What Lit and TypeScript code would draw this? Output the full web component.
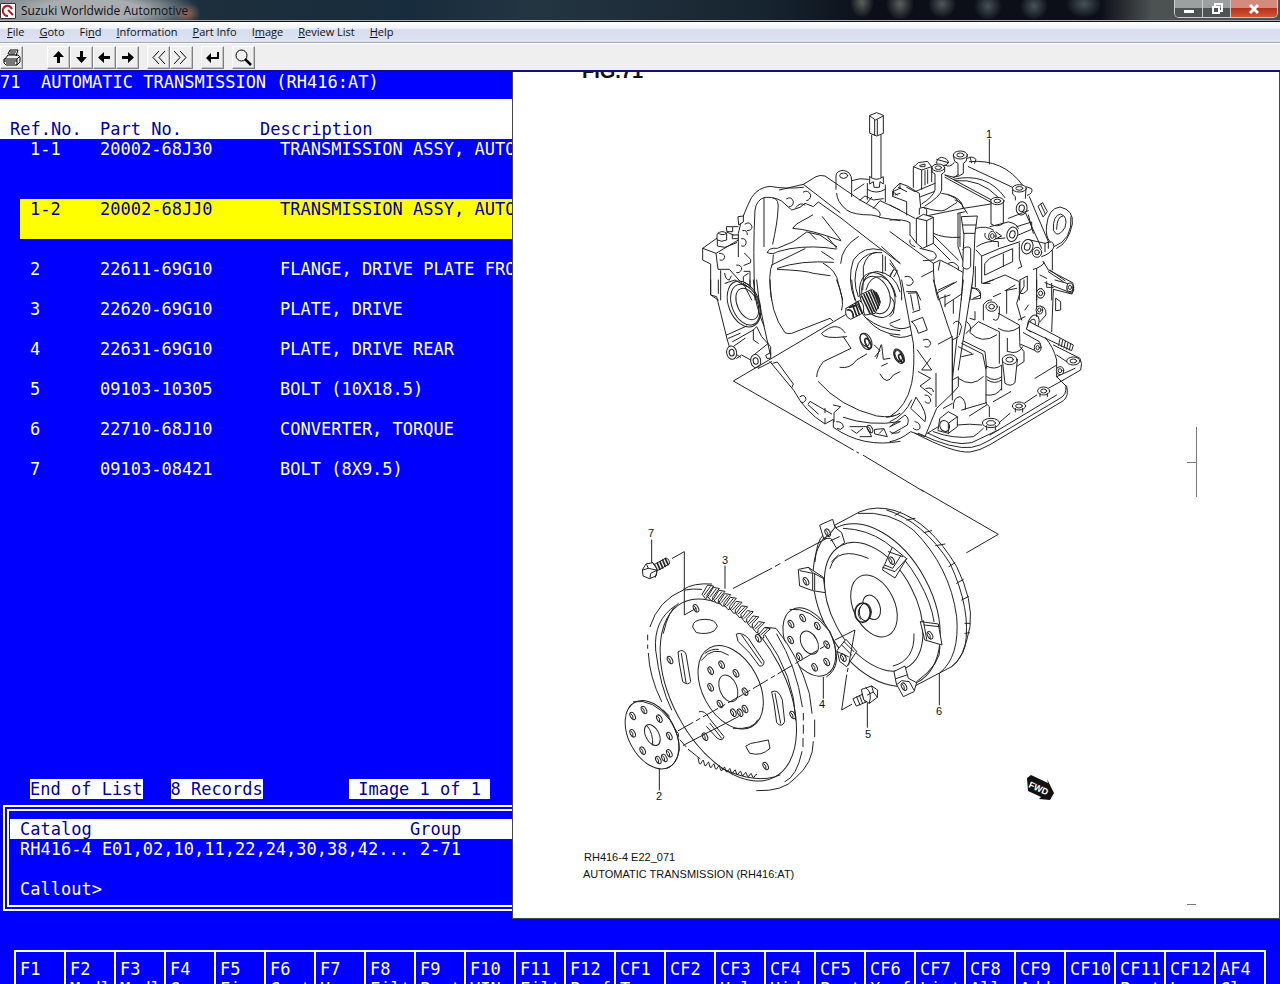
import { LitElement, html, svg, css } from "lit";
import { customElement } from "lit/decorators.js";

type Hole = [number, number];

const menus: [string, string, string][] = [
  ["", "F", "ile"], ["", "G", "oto"], ["Fi", "n", "d"], ["", "I", "nformation"],
  ["", "P", "art Info"], ["I", "m", "age"], ["", "R", "eview List"], ["", "H", "elp"],
];

const parts = [
  { ref: "1-1", no: "20002-68J30", text: "TRANSMISSION ASSY, AUTO", kind: "tall" },
  { ref: "1-2", no: "20002-68JJ0", text: "TRANSMISSION ASSY, AUTO", kind: "tall selected" },
  { ref: "2", no: "22611-69G10", text: "FLANGE, DRIVE PLATE FRO", kind: "" },
  { ref: "3", no: "22620-69G10", text: "PLATE, DRIVE", kind: "" },
  { ref: "4", no: "22631-69G10", text: "PLATE, DRIVE REAR", kind: "" },
  { ref: "5", no: "09103-10305", text: "BOLT (10X18.5)", kind: "" },
  { ref: "6", no: "22710-68J10", text: "CONVERTER, TORQUE", kind: "" },
  { ref: "7", no: "09103-08421", text: "BOLT (8X9.5)", kind: "" },
];

const keys: [string, string][] = [
  ["F1", ""], ["F2", "Modl"], ["F3", "Modl"], ["F4", "Grp"], ["F5", "Fig"], ["F6", "Cost"], ["F7", "Home"],
  ["F8", "Filt"], ["F9", "Post"], ["F10", "VIN"], ["F11", "Filt"], ["F12", "Prof"], ["CF1", "Top"], ["CF2", ""],
  ["CF3", "Help"], ["CF4", "Hide"], ["CF5", "Post"], ["CF6", "Xref"], ["CF7", "List"], ["CF8", "All"],
  ["CF9", "Add"], ["CF10", ""], ["CF11", "Part"], ["CF12", "Lang"], ["AF4", "Clos"],
];

@customElement("parts-diagram")
class PartsDiagram extends LitElement {
  static styles = css`
    :host { display: block; }
    .sheet { display: block; width: 100%; height: auto; }
    .ink { fill: none; stroke: #222; stroke-width: 3; stroke-linejoin: round; stroke-linecap: round; }
    .solid { fill: #fff; }
    .bare { stroke: none; }
    .dark { fill: #333; }
    .heavy { stroke-width: 5; }
    .dash { stroke-dasharray: 50 12 12 12; }
    .thin { fill: none; stroke: #777; stroke-width: 1; }
    .callout { font: 11px "Liberation Sans", Arial, sans-serif; text-anchor: middle; fill: #111; }
    .caption { font: 11px "Liberation Sans", Arial, sans-serif; fill: #111; }
    .figure { font: bold 20px "Liberation Sans", Arial, sans-serif; fill: #111; }
    .fwd { font: bold 9px "Liberation Sans", Arial, sans-serif; fill: #fff; }
  `;

  ring(x: number, y: number, rx: number, ry: number, tilt = -28, cls = "") {
    return svg`<ellipse class=${cls} cx=${x} cy=${y} rx=${rx} ry=${ry} transform="rotate(${tilt} ${x} ${y})"></ellipse>`;
  }

  holes(list: Hole[]) {
    return list.map(([x, y]) => svg`${this.ring(x, y, 7, 12)}<path d="M${x - 5} ${y - 7}q8 6 6 16"></path>`);
  }

  boss(x: number, y: number, rx: number, ry: number, tilt = 0) {
    return svg`${this.ring(x, y, rx, ry, tilt, "solid")}${this.ring(x, y, rx / 2, ry / 2, tilt)}`;
  }

  gearTop() {
    return Array.from({ length: 11 }, (_, i) => {
      const x = 277 + i * 17;
      const y = 222 + i * 6 + i * i * 0.6;
      const rise = 27 - i * 0.8;
      return svg`<path class="solid" d="M${x} ${y}l16 ${-rise}l18 3l-20 ${rise}v9q-6 4 -8 -2zM${x + 6} ${y + 2}l18 ${-rise + 3}"></path>`;
    });
  }

  gearBottom() {
    let d = "M264 714";
    for (let i = 0; i < 11; i++) d += `l4 ${17 - i * 0.6}q5 4 7 -5l5 ${-6 + i * 0.3}`;
    return svg`<path d=${d}></path>`;
  }

  housing() {
    return svg`
      <g transform="translate(690 100) scale(.33333)">
        <path d="M540 46L560 38L580 46V100L560 108L540 100ZM540 48L556 60L580 48M554 60V106M562 60V106M545 106V232M573 106V232"></path>
        <path d="M539 230V252L550 245L552 262H568L570 245L580 252V230Q558 246 539 230M532 250V298M586 255V305M532 268Q558 285 586 268"></path>
        <path d="M438 268V228Q438 213 460 211Q484 215 485 240V290M485 242Q510 232 535 238M492 272L522 252"></path>
        <ellipse cx="461" cy="227" rx="12" ry="8"></ellipse>
        <path d="M145 470V400Q155 350 185 292Q205 262 240 259Q285 268 340 262M268 270L340 253L378 230Q390 224 405 228L510 300L560 328Q576 340 568 350L545 345Q490 345 470 330Q440 305 440 280"></path>
        <path d="M340 253L450 338M195 600Q188 450 195 330Q200 298 225 292Q265 290 285 312L305 330L330 322L345 310L370 320L385 306L450 352L550 430L630 490"></path>
        <path d="M222 294V440M250 294Q268 296 264 330Q262 370 248 432M250 465L248 490Q232 520 245 600"></path>
        <path d="M290 296Q305 288 310 305Q310 320 298 320M340 276Q355 268 362 285Q362 300 350 302M318 322Q330 305 345 315"></path>
        <path d="M165 372Q180 362 186 380Q186 392 172 392M158 392Q172 388 172 404M155 416Q170 414 168 430Q165 442 155 438M88 460Q104 460 104 472Q100 484 90 480M140 495Q156 495 155 508Q150 520 140 518M104 520Q106 540 118 540L124 528"></path>
        <path d="M164 460L182 478V488L162 496M162 514H180V558L160 545V530L175 520"></path>
        <path d="M80 415L38 445V480L62 492V585L85 600M38 445L78 460L84 508L118 508L165 560L185 600M78 460L145 420M92 512V600"></path>
        <path class="solid" d="M82 402Q95 388 110 400V420Q95 428 82 420ZM110 380H128V395H112ZM128 405H145V416H128ZM145 350L160 348V366L147 374Z"></path>
        <path d="M84 398Q95 410 110 400M82 420V438L105 442L140 428M110 396L130 405M130 380H144"></path>
        <path d="M368 345L320 372L308 385Q360 388 452 422M397 350L452 420M232 458Q235 442 262 445L310 425L350 396L390 405L440 440M232 458Q250 465 262 455L300 446Q370 435 438 447M245 495L345 446M262 505Q330 480 430 487M262 508Q350 512 370 520L420 527M395 455L430 478M400 490Q440 512 445 550L458 600M360 400L378 418M412 410L440 445"></path>
        <path d="M452 490Q455 440 505 410M495 600Q470 540 490 480Q520 435 575 450M505 590Q485 540 505 490Q530 452 575 458M520 545V500Q530 460 560 457M578 465V520M586 470V512M600 525L612 508M612 530L622 512"></path>
        <path d="M518 570Q515 520 560 514Q615 520 630 575M528 570Q540 525 575 530Q610 545 618 590M575 440L630 490"></path>
        <path d="M510 300L525 288L550 300L580 296M530 310L545 292M550 325L570 302L630 330M568 352L630 362M608 290V275L630 265M615 285L630 280"></path>
      </g>
      <g transform="translate(890 100) scale(.33333)">
        <path d="M298 118V192"></path>
        ${this.boss(211, 165, 21, 12)}${this.boss(145, 203, 19, 11)}
        <path d="M190 168L194 184L204 190V225M232 168L228 184L220 190V220Q210 230 190 232M165 195Q180 205 192 188M165 225L192 232L205 224"></path>
        <path d="M126 206V216L135 222V270Q130 290 95 312M164 206V216L155 222V270Q150 290 105 318"></path>
        <path d="M70 262V202L85 188L112 184L125 200V245M70 200L95 210V268M95 210L125 200M105 212V255M113 210V250M90 196L105 192V200H92Z"></path>
        <path d="M140 190Q138 175 155 172Q175 176 175 188Q170 198 160 198M140 178L175 188M233 175Q246 166 258 178L254 190M240 172L245 188"></path>
        <path d="M238 185Q340 175 398 256M235 200L372 264M190 238Q290 215 345 293M195 242Q270 235 325 292M165 225L305 300M165 232L305 308"></path>
        ${this.boss(388, 265, 21, 11)}${this.boss(322, 303, 20, 11)}
        <path d="M368 268V282L376 290V300M408 268L406 295M303 306V372Q322 384 340 370V306M408 260L425 266Q430 280 412 286M418 290L475 425M405 335L455 445M415 345L430 400"></path>
        ${this.boss(395, 325, 16, 20, 10)}
        <path d="M108 348L220 325L303 312M100 322Q150 338 165 330L200 308M155 280Q200 280 232 340M175 285Q215 292 220 325M195 300L215 310"></path>
        <path class="solid" d="M80 355L100 343L130 352V430L98 445L80 430Z"></path>
        <path d="M80 355L110 362L130 352M110 362V440M88 343V325Q100 318 110 328V345"></path>
        <path d="M0 315L75 355M0 360Q40 356 60 368V405M0 395L130 490Q130 560 145 600M10 285V268L30 250L52 258L88 280L92 322M10 290L50 305V345M50 262L75 275L135 250M25 262L50 275M30 250V265M8 275L22 285M92 290L132 275"></path>
        <path d="M60 405L80 430M130 400Q160 415 210 412M132 408L205 480M130 430L180 480M95 530L130 512M145 570L192 548M130 490L150 480L190 500L220 518M90 445L130 455Q148 470 130 480L100 482M60 420Q55 435 75 440M175 490Q190 480 205 500L205 510M150 485L145 510"></path>
        <path class="solid bare" d="M222 400H255L250 520L240 600H214L220 505Z"></path>
        <path d="M204 340V440L218 480M210 340V440M204 340L225 335M215 350L262 348L255 400H222ZM218 375H258M222 400L218 500Q230 515 242 500V445Q230 435 218 448M255 400L250 520L240 600M220 505L214 600"></path>
        <path d="M256 385Q290 376 310 390M300 380L355 366Q380 370 385 385M355 355L415 332M380 380L425 366V388L385 405M300 418L345 414M285 400Q280 415 300 420M260 440Q290 420 325 425V440"></path>
        ${this.boss(307, 408, 11, 14)}${this.boss(367, 403, 16, 22, 15)}${this.boss(412, 440, 17, 22, 15)}${this.boss(441, 457, 14, 15)}
        <path d="M318 396L335 408L320 415M420 420L465 430Q492 418 492 440Q485 460 455 470M388 430V475L395 500M465 430V455M475 425V445"></path>
        <path d="M470 375Q475 325 510 321Q552 330 547 372Q535 430 500 445M470 375Q465 410 480 425M543 350Q548 420 492 440M490 390Q488 345 512 342Q535 350 525 382Q512 405 500 402ZM500 388Q500 350 518 348"></path>
        <path d="M445 318L458 308L472 335L460 350ZM452 312L466 342"></path>
        <path d="M285 490L300 475L368 446V485L285 525ZM340 462V500M258 450L275 468V550H300M275 468L330 445L390 425M256 500V560M282 550L345 525L388 545V600M430 508L440 505V600M395 500L385 505M350 570L375 555M390 540L412 528V570Q400 585 392 580"></path>
        <path d="M460 485L475 510L548 548Q556 562 546 580L465 548M475 515L520 545M480 510L525 542M487 450V510M485 550V600M440 505Q470 490 460 485M450 525L470 535"></path>
        ${this.boss(540, 565, 9, 14)}${this.boss(452, 580, 11, 14)}
        <path d="M245 565Q272 560 272 585L250 595M45 530Q65 525 70 545Q65 560 50 555M50 575H80L92 600M0 490L20 515M10 510L0 530M0 480Q40 530 35 600"></path>
      </g>
      <g transform="translate(690 280) scale(.33333)">
        <path d="M62 0V45L80 50L112 180M85 0V40M105 10L135 0L170 20M180 0V25L160 10"></path>
        ${this.ring(162, 72, 46, 72, -22)}${this.ring(166, 74, 40, 64, -22)}${this.ring(172, 72, 30, 50, -25)}
        <path d="M190 0Q195 80 222 138L240 220M200 0Q205 70 222 138M240 0Q240 100 285 158Q292 162 305 160L420 115L428 122M455 90Q465 60 440 0M110 165L170 138M115 175L150 160M112 180L118 200M128 185L190 150L200 140L215 170L242 200V225M190 150V180L205 190"></path>
        ${this.boss(125, 218, 15, 20, -10)}${this.boss(197, 243, 15, 20, -10)}
        <path d="M132 198L165 175M140 235L155 225L182 240M195 222L235 190M205 265L245 245M142 225L152 232M228 225L242 218V235H232Z"></path>
        <path d="M470 102L130 303L490 510M500 516L506 519M520 526L700 634"></path>
        <path d="M240 245L312 332Q345 395 405 432L430 418V442Q520 505 630 484M248 250L262 246L310 312L306 322M355 372L360 364L425 402M355 375L385 402M405 430V415M330 350Q345 340 348 358Q342 372 332 366"></path>
        <path d="M430 375L452 380L432 398V425M440 425Q460 425 460 442Q452 452 442 446M480 440L530 440L545 470L510 470M485 450L500 460L518 445M555 448L582 446L592 470L555 462ZM568 460L580 448M600 440L630 425M600 455Q615 465 630 455M405 385V398"></path>
        <path d="M385 305Q450 380 560 408Q610 415 630 400M460 412Q540 440 630 425M590 412L610 408"></path>
        <path d="M395 160Q440 120 465 158M395 162Q400 178 470 170M460 170L483 205L400 245Q380 270 380 290M450 262Q480 268 500 240L530 222M570 282Q590 320 610 285L630 275M575 258L592 250M553 195L570 212L555 230M575 195L580 238L600 235M573 195L560 235"></path>
        ${this.ring(562, 45, 50, 70, -22)}${this.ring(558, 45, 40, 58, -22)}
        <path class="solid" d="M510 45L545 28Q570 40 570 70L555 100L525 105Z"></path>
        <path class="heavy" d="M515 48L540 100M522 44L547 98M529 40L553 94M536 36L559 90M543 32L565 84M551 34L568 75M558 38L570 66"></path>
        <path class="solid" d="M468 85L508 62Q525 70 520 98L482 118Q462 110 468 85"></path>
        <path class="heavy" d="M488 75L500 108M496 70L508 104M504 65L516 98M472 90Q490 88 490 112M478 82L498 76"></path>
        <path d="M485 0Q490 100 570 150Q600 165 630 165M530 115Q570 148 630 152M600 130L630 118"></path>
        ${this.ring(528, 184, 16, 26, -25)}${this.ring(524, 180, 12, 20, -25)}${this.ring(534, 190, 7, 16, -25, "heavy")}${this.ring(624, 226, 12, 20, -20)}
        ${this.holes([[540, 447]])}
      </g>
      <g transform="translate(890 280) scale(.33333)">
        <path d="M35 0L70 190Q75 260 65 310Q50 380 0 410M130 0Q160 100 187 175V360M187 175V340L140 385L105 470L62 455Q30 480 0 485M138 280V380M0 425Q45 405 65 360M0 50Q20 60 10 100L0 110M0 135Q30 155 60 140M0 165Q30 180 65 165"></path>
        <path d="M55 40L80 38L90 90L68 97M62 45L70 90M65 125L98 112L112 150L85 160Q78 135 65 125M100 180Q118 172 122 190Q118 206 105 200M82 210L125 270H95L122 235M85 275L122 295L90 318L125 345M108 325Q130 320 130 335M105 345Q122 345 122 365Q115 375 105 365M78 352L62 385L105 425Q115 400 78 352M75 425Q92 428 90 445Q80 455 70 445M0 440L45 405Q60 415 52 435L5 462"></path>
        <path d="M145 192L187 170M140 40L200 5M150 55L180 45M165 75L215 42M165 45V80M190 60V100"></path>
        <path class="solid bare" d="M222 0H248L205 280L190 290Z"></path>
        <path d="M220 0L187 300L205 290V320L187 340M248 0L205 270M190 130Q205 112 215 140L208 165M187 180L205 170"></path>
        ${this.ring(28, 230, 13, 22, -25)}${this.ring(26, 228, 9, 17, -25)}${this.ring(34, 235, 6, 13, -25, "heavy")}
        <path d="M215 190L278 222L288 270V370L298 380V410M220 183L285 215L290 265M205 200L245 220M215 230L250 222M205 295Q245 325 280 290M228 160L265 125L328 155V250M240 158Q275 195 320 165M230 125Q248 140 240 156M288 258Q315 272 335 255V330M290 290Q315 308 335 290M292 300Q315 315 335 300M288 345Q320 350 335 325"></path>
        <path d="M325 100L388 135L390 200L402 215V245L382 258M325 145Q355 165 388 142M352 175V215M355 215Q385 225 398 200M280 120V75Q290 58 305 60M328 80V100M310 118Q325 130 328 100"></path>
        ${this.boss(305, 80, 17, 14)}
        <path class="solid" d="M337 240L345 310Q362 322 375 308L382 240Z"></path>${this.boss(359, 239, 22, 15)}
        <path class="solid" d="M400 158L448 185Q458 200 446 216L390 192"></path>${this.boss(443, 203, 10, 13)}
        ${this.ring(430, 130, 16, 26, 20)}${this.ring(426, 133, 9, 16, 20)}
        <path class="solid" d="M418 125L550 195L545 212L410 148Z"></path>
        <path d="M510 176L506 196M518 180L514 200M526 184L522 204M534 188L530 208M542 192L538 210"></path>
        <path d="M465 172Q490 200 500 240V290M490 195L570 235Q578 250 572 270L520 300M500 225L530 245M500 290L555 265"></path>
        ${this.boss(550, 243, 20, 12)}${this.boss(510, 272, 11, 12)}
        <path d="M75 460Q190 520 240 516Q270 512 300 494L520 362Q538 348 530 318M85 460Q190 510 245 502Q270 498 300 480L510 355Q530 345 528 318L500 290M115 460Q190 500 245 488L325 450M130 455Q190 478 250 470Q265 460 280 445M325 430L360 400M400 372L440 345M475 325L520 300M300 465L500 345"></path>
        ${this.boss(303, 429, 26, 14)}${this.boss(387, 378, 20, 12)}${this.boss(461, 333, 18, 12)}
        <path d="M200 435Q240 430 275 435M238 408L290 375M310 365L362 335M435 295L500 255M290 437V450M316 437V450M376 385V396M398 385V396M450 340V350M472 340V350"></path>
        <path class="solid" d="M150 415L175 395L202 410V440L175 460L145 452Z"></path>
        ${this.ring(164, 438, 14, 17)}
        <path d="M175 460V430L202 410M112 460L145 440M190 385Q188 352 210 350Q230 360 226 388M215 390L290 368M160 385L187 370"></path>
        <path d="M390 0V40L380 70L395 120M402 0V20L390 40M440 0V110M350 30V100M310 50L332 40M345 32L380 25M385 120L405 110M405 90L415 75M495 0L548 15Q556 30 546 42L490 28M490 30L485 155M498 55L512 65V90L498 92ZM440 80Q470 72 468 105L450 125M245 22Q275 30 272 55L245 58M255 95V120L240 115M280 10L310 0M470 5V22H490"></path>
        ${this.boss(452, 40, 12, 14)}${this.boss(540, 22, 9, 13)}${this.boss(448, 90, 10, 12)}
      </g>`;
  }

  converter() {
    return svg`
      <g transform="translate(780 490) scale(.33333)">
        <path d="M425 0L655 133L560 188"></path>
        <path class="solid" d="M165 105L240 65Q290 45 345 62Q450 95 530 230Q580 330 570 410Q550 510 515 530L410 585Z"></path>
        <path d="M235 70Q330 62 400 120Q510 230 530 380Q540 500 480 548M320 60Q430 95 510 220Q575 360 555 470Q545 505 515 530"></path>
        <path d="M345 76L362 66M380 90L405 85M432 128L455 122M467 167L495 162M507 230L525 218M530 280L550 268M545 330L565 320M555 400H570M555 430L568 428"></path>
        ${this.ring(290, 345, 165, 262, -28, "solid")}
        <path d="M190 115Q330 120 415 270Q455 340 462 395M480 470Q485 520 410 575M105 215Q110 150 130 135"></path>
        ${this.ring(281, 350, 126, 208)}
        <path d="M150 235Q170 165 265 205M402 432Q405 510 340 528M155 215L175 195"></path>
        ${this.ring(282, 348, 62, 98, -25)}${this.ring(275, 352, 25, 38, -20)}
        <ellipse class="solid heavy" cx="248" cy="368" rx="23" ry="29"></ellipse>
        <ellipse cx="256" cy="366" rx="18" ry="26"></ellipse><path d="M240 352Q228 370 242 388"></path>
        <path class="solid" d="M120 105L158 88L165 112L185 128L194 158L170 175L152 145L132 145ZM152 152L178 140M132 145L148 135L165 112"></path>
        <path class="solid" d="M338 172L380 206L345 264L308 240ZM325 185L368 200"></path>
        <path d="M308 232L345 245L380 206M316 226L338 235L362 198"></path>
        <path class="solid" d="M56 238L85 232L130 262L136 308L98 302L60 288Z"></path>
        <path d="M60 242L98 250V300M104 250V300M85 232L98 248L130 265"></path>
        <path class="solid" d="M422 395L475 402L486 465L435 450Z"></path>
        <path d="M432 405L478 410M430 392L440 448"></path>
        <path class="solid" d="M343 544L375 528L385 565L410 578L402 605L370 620L350 584Z"></path>
        <path d="M348 566L380 555M350 584L365 572L388 575L402 600"></path>
        <path class="solid" d="M172 480L198 448L230 484L200 530L180 515Z"></path>
        <path d="M185 465L215 495M192 455L222 485M172 485L205 500"></path>
        ${this.holes([[143, 128], [335, 212], [78, 274], [450, 436], [372, 590], [190, 503]])}
        ${this.ring(88, 456, 68, 110, -28, "solid")}<path d="M30 358Q90 350 150 425Q170 470 170 510Q165 545 140 560"></path>
        ${this.ring(88, 458, 24, 37)}
        ${this.holes([[33, 402], [68, 384], [112, 408], [32, 450], [140, 464], [58, 500], [104, 532], [140, 516]])}
        <path d="M165 450L225 420L206 525M204 535L202 545M200 555L185 660L215 643M130 562V625M262 640V712M478 550V645"></path>
        <path class="solid" d="M220 626L262 606L272 630L230 648Z"></path>
        <path d="M230 620L240 645M238 616L248 641M246 612L256 637M254 609L264 634"></path>
        <path class="solid" d="M245 598L275 588L293 600L292 622L268 640L252 630Z"></path>
        <path d="M258 594Q278 605 268 640M275 588L280 606L292 622M262 615L280 606"></path>
      </g>`;
  }

  flywheel() {
    return svg`
      <g transform="translate(610 520) scale(.33333)">
        <path class="solid bare" d="M115 400Q110 320 145 265Q190 205 250 192Q290 188 330 202L490 322Q560 400 600 520Q622 620 608 700Q580 785 520 806Q480 816 440 812L270 715Q190 640 150 545Q118 470 115 400Z"></path>
        <path d="M120 320Q145 240 220 210M220 208Q250 188 305 192M113 345V360M113 375V385M115 400Q118 470 155 545M225 210Q250 205 275 208M465 322L498 325Q565 405 598 520L606 580M614 600V650M610 665Q610 730 555 775Q520 815 440 812M210 660L228 680M235 688L270 716M500 342Q560 440 577 560M580 580V600M580 615V640M579 655V680M576 695Q560 770 525 785"></path>
        ${this.ring(355, 510, 170, 296)}
        <path d="M195 258Q130 300 137 390Q150 500 185 570M160 340Q175 270 205 250M335 745Q440 795 510 765M465 345Q555 470 557 600"></path>
        ${this.gearTop()}${this.gearBottom()}
        <path d="M248 320Q248 298 285 298Q318 298 322 320L312 333Q290 345 260 338ZM380 342Q395 335 415 355L462 425Q462 440 448 438L420 400L385 365ZM395 345L455 430M205 395Q220 385 228 402L242 485Q235 498 218 485L208 430ZM214 400L228 488M486 515Q505 505 517 540L524 605Q515 625 500 608L492 550ZM495 520L512 610M408 678Q420 668 440 667L475 660L480 685Q455 710 420 700ZM268 575Q285 570 298 595L342 650Q338 665 322 655L290 620M300 610L335 655"></path>
        ${this.ring(362, 502, 85, 134)}<path d="M275 420Q310 375 355 405M370 625Q430 630 443 600M285 400Q305 385 325 388"></path>
        ${this.ring(355, 505, 26, 42, -22)}
        ${this.holes([[335, 434], [302, 452], [378, 460], [302, 502], [405, 515], [330, 552], [370, 578], [390, 578], [405, 567], [258, 265], [180, 420], [285, 650], [548, 585], [467, 738], [445, 355]])}
        <path class="dash" d="M205 632L405 520L655 372"></path>
        <path d="M220 676L385 590"></path>
        ${this.ring(126, 644, 70, 110, -28, "solid")}<path d="M70 545Q130 535 180 600Q210 650 208 690Q200 735 170 746M160 570L178 588M195 628L205 640V650"></path>
        ${this.ring(127, 645, 20, 34)}<path d="M112 618Q130 640 128 675"></path>
        ${this.holes([[102, 570], [68, 588], [148, 596], [68, 640], [178, 648], [98, 692], [145, 720], [163, 714], [178, 700]])}
        <path class="solid" d="M130 135L168 114Q180 118 178 132L142 152Z"></path>
        <path class="heavy" d="M142 130L150 148M150 125L158 144M158 120L166 139M166 116L174 134"></path>
        <path class="solid" d="M98 148L108 132L128 128L142 148L138 168L118 176L100 168Z"></path>
        <path d="M98 150L115 145L138 150M115 145L110 134M120 176L122 160L138 152M125 126Q150 140 136 172M125 60V126"></path>
        <path d="M187 115L223 95V285L258 265M345 138V205M370 205L485 145M496 139L510 131M525 122L650 55M148 747V810"></path>
      </g>`;
  }

  render() {
    return html`
      <svg class="sheet" viewBox="513 72 766 846" role="img" aria-label="Exploded view of the automatic transmission">
        <text class="figure" x="582" y="78">FIG.71</text>
        <g class="ink">${this.housing()}${this.converter()}${this.flywheel()}</g>
        <text class="callout" x="989" y="138">1</text>
        <text class="callout" x="659" y="800">2</text>
        <text class="callout" x="725" y="564">3</text>
        <text class="callout" x="822" y="708">4</text>
        <text class="callout" x="868" y="738">5</text>
        <text class="callout" x="939" y="715">6</text>
        <text class="callout" x="651" y="537">7</text>
        <path class="thin" d="M1196.5 427V497M1187 462.500H1196M1187 904.500H1196"></path>
        <path d="M1027 778L1031 775L1048 783L1047 779L1054 793L1050 800L1039 799L1041 797L1028 791Z" fill="#111"></path>
        <text class="fwd" transform="translate(1028 787) rotate(24)">FWD</text>
        <text class="caption" x="584" y="861">RH416-4 E22_071</text>
        <text class="caption" x="583" y="878">AUTOMATIC TRANSMISSION (RH416:AT)</text>
      </svg>`;
  }
}

const icons = {
  print: svg`<path d="M7 7L9 3H17L15 9M4 12L7 8H17L19 10V15L16 18H5L3 16V12H16L19 9M3 14H16M5 16H14M9 5H15M8 7H14M16 12V18" fill="none" stroke="#000"></path>`,
  up: svg`<path d="M10.500 4L16 10H12V16H9V10H5Z"></path>`,
  down: svg`<path d="M10.500 16L16 10H12V4H9V10H5Z"></path>`,
  left: svg`<path d="M4 10.500L10 5V9H16V12H10V16Z"></path>`,
  right: svg`<path d="M17 10.500L11 5V9H5V12H11V16Z"></path>`,
  first: svg`<path d="M11 4L5 10.500L11 17M17 4L11 10.500L17 17" fill="none" stroke="#000"></path>`,
  last: svg`<path d="M3 4L9 10.500L3 17M9 4L15 10.500L9 17" fill="none" stroke="#000"></path>`,
  enter: svg`<path d="M4 11L9 6V10H15V5H17V12H9V16Z"></path>`,
  find: svg`<circle cx="8.500" cy="8.500" r="5.500" fill="none" stroke="#000"></circle><path d="M12 12L18 18" stroke="#000" stroke-width="2.500"></path>`,
};

@customElement("app-root")
class AppRoot extends LitElement {
  static styles = css`
    :host { display: flex; flex-direction: column; height: 100vh; overflow: hidden; background: #00f;
      font: 12px/20px "Open Sans", "Noto Sans", sans-serif; color: #111; }
    * { box-sizing: border-box; }
    button, input { font: inherit; color: inherit; margin: 0; border: 0; padding: 0; background: none; border-radius: 0; }
    .titlebar { display: flex; align-items: flex-start; flex: none; height: 22px; border-bottom: 1px solid #111; box-shadow: inset 0 -1px #a9adb0;
      background:
        radial-gradient(ellipse 110px 24px at 90px 10px, #a9adb0 45%, transparent),
        radial-gradient(ellipse 14px 10px at 187px 14px, #8a5548, transparent),
        radial-gradient(ellipse 12px 16px at 862px 2px, #5b605e, transparent),
        radial-gradient(ellipse 14px 16px at 900px 4px, #5b605e, transparent),
        radial-gradient(ellipse 14px 14px at 942px 4px, #50575a, transparent),
        radial-gradient(ellipse 14px 14px at 988px 6px, #46525a, transparent),
        radial-gradient(ellipse 14px 14px at 1034px 6px, #46525a, transparent),
        radial-gradient(ellipse 18px 14px at 1084px 4px, #46525a, transparent),
        linear-gradient(90deg, #7c868c 0, #1d2f3c 200px, #172c3d 32%, #243542 42%, #16242f 60%, #0c0f18 68%, #0c0f18 86%, #4c5252 90%, #4c5252); }
    .logo { flex: none; width: 16px; height: 16px; margin: 3px 5px 0 0; }
    .title { flex: 1; margin: 0; font: inherit; line-height: 21px; }
    .windowkeys { display: flex; height: 18px; margin-right: 2px; border: 1px solid #c9cccd; border-top: 0; border-radius: 0 0 5px 5px; overflow: hidden; }
    .windowkey { display: grid; place-items: center; width: 28px; background: linear-gradient(#9ca0a0 50%, #4e5454 50%); border-right: 1px solid #c9cccd; }
    .windowkey.close { width: 46px; border: 0; background: linear-gradient(#d48b7c 45%, #b8321b 50%, #d4553a); }
    .menubar { display: flex; flex: none; height: 21px; border-bottom: 1px solid #a3a7b0;
      background: linear-gradient(#fff, #f1f4fa 30%, #d6ddee 40%, #dfe4f3); }
    .menu { padding: 0 8px 0 7px; line-height: 20px; font-size: 11px; }
    .accel { text-decoration: underline; }
    .toolbar { display: flex; gap: 8px; flex: none; height: 29px; padding-top: 2px; background: #efefef; border-top: 1px solid #fff; border-bottom: 2px solid #10107c; }
    .group { display: flex; }
    .group.wide { margin-right: 16px; }
    .tool { width: 23px; height: 23px; border: 1px solid; border-color: #fff #808080 #808080 #fff; box-shadow: inset -1px -1px #c4c4c4; }
    .tool svg { display: block; }
    .work { display: grid; grid-template-columns: 2fr 3fr; flex: none; }
    .terminal { display: flex; flex-direction: column; min-width: 0; overflow: hidden; }
    .terminal, .keys { font: 17px/20px "DejaVu Sans Mono", "Liberation Mono", monospace; color: #fff; }
    .heading { margin: 0 0 7px; font: inherit; white-space: pre; }
    .list { border-spacing: 0; table-layout: fixed; width: 100%; white-space: nowrap; }
    .list th { padding: 20px 0 0; height: 40px; font-weight: inherit; text-align: left; background: #fff; color: #0000a0; }
    .list th:first-child { padding-left: 10px; width: 100px; }
    .list th:nth-child(2) { width: 160px; }
    .list td { height: 40px; padding: 0; vertical-align: top; }
    .list td:first-child { padding-left: 30px; }
    .list td:last-child { padding-left: 20px; }
    .list .tall td { height: 60px; }
    .list .selected td { color: #0000a0; background: linear-gradient(#ff0, #ff0) 0 0 / 100% 40px no-repeat; }
    .list .selected td:first-child { background-position: 20px 0; }
    .status { display: flex; gap: 28px; margin: auto 22px 6px 30px; color: #0000a0; white-space: nowrap; }
    .chip { background: #fff; }
    .chip.image { margin-left: auto; padding: 0 9px; }
    .panel { margin: 0 -10px 8px 3px; padding: 8px 0 6px 1px; border: 6px double #fff; white-space: nowrap; }
    .pair { display: grid; grid-template-columns: 390px 1fr; padding-left: 10px; }
    .pair.head { background: #fff; color: #0000a0; }
    .pair .code { padding-left: 10px; }
    .prompt { display: flex; padding: 20px 0 0 10px; }
    .entry { flex: 1; min-width: 0; height: 20px; outline: 0; }
    .viewer { background: #fff; border: solid #444; border-width: 0 1px 1px; min-width: 0; }
    .keys { display: grid; grid-template-columns: repeat(25, 1fr); flex: none; margin: 31px 14px 0; border: solid #fff; border-width: 2px 1px 0; }
    .key { display: flex; flex-direction: column; align-items: flex-start; justify-content: flex-start; min-width: 0; height: 60px; padding: 7px 0 0 4px; border: solid #fff; border-width: 0 1px; overflow: hidden; white-space: nowrap; }
  `;

  tool(name: keyof typeof icons, label: string) {
    return html`<button class="tool" aria-label=${label}><svg width="21" height="21" viewBox="0 0 21 21">${icons[name]}</svg></button>`;
  }

  render() {
    return html`
      <header class="titlebar">
        <svg class="logo" viewBox="0 0 16 16"><rect width="16" height="16" fill="#fff"></rect><path d="M12 6Q10 2 6 3Q2 5 3 9Q4 13 8 13M8 7L13 12" fill="none" stroke="#b31c1c" stroke-width="2"></path><path d="M.5 .5H15.500V15.500H.5Z" fill="none" stroke="#333"></path></svg>
        <h1 class="title">Suzuki Worldwide Automotive</h1>
        <div class="windowkeys">
          <button class="windowkey" aria-label="Minimize"><svg width="12" height="12"><path d="M1 7H11V10H1Z" fill="#fff"></path></svg></button>
          <button class="windowkey" aria-label="Restore"><svg width="12" height="12"><path d="M4 3V1H11V8H9M2 4H8V10H2Z" fill="none" stroke="#fff" stroke-width="2"></path></svg></button>
          <button class="windowkey close" aria-label="Close"><svg width="12" height="12"><path d="M2 2L10 10M10 2L2 10" stroke="#fff" stroke-width="3"></path></svg></button>
        </div>
      </header>
      <nav class="menubar">${menus.map(([a, b, c]) => html`<button class="menu">${a}<span class="accel">${b}</span>${c}</button>`)}</nav>
      <div class="toolbar" role="toolbar">
        <div class="group wide">${this.tool("print", "Print")}</div>
        <div class="group">${this.tool("up", "Up")}${this.tool("down", "Down")}${this.tool("left", "Left")}${this.tool("right", "Right")}</div>
        <div class="group">${this.tool("first", "Previous page")}${this.tool("last", "Next page")}</div>
        <div class="group">${this.tool("enter", "Enter")}</div>
        <div class="group">${this.tool("find", "Zoom")}</div>
      </div>
      <main class="work">
        <section class="terminal">
          <h2 class="heading">71  AUTOMATIC TRANSMISSION (RH416:AT)</h2>
          <table class="list">
            <thead><tr><th>Ref.No.</th><th>Part No.</th><th>Description</th></tr></thead>
            <tbody>${parts.map((p) => html`<tr class=${p.kind}><td>${p.ref}</td><td>${p.no}</td><td>${p.text}</td></tr>`)}</tbody>
          </table>
          <div class="status"><span class="chip">End of List</span><span class="chip">8 Records</span><span class="chip image">Image 1 of 1</span></div>
          <div class="panel">
            <div class="pair head"><span>Catalog</span><span>Group</span></div>
            <div class="pair"><span>RH416-4 E01,02,10,11,22,24,30,38,42...</span><span class="code">2-71</span></div>
            <div class="prompt"><label for="callout">Callout&gt;</label><input id="callout" class="entry" autocomplete="off"></div>
          </div>
        </section>
        <section class="viewer"><parts-diagram></parts-diagram></section>
      </main>
      <footer class="keys">${keys.map(([k, t]) => html`<button class="key"><span>${k}</span><span>${t}</span></button>`)}</footer>`;
  }
}
